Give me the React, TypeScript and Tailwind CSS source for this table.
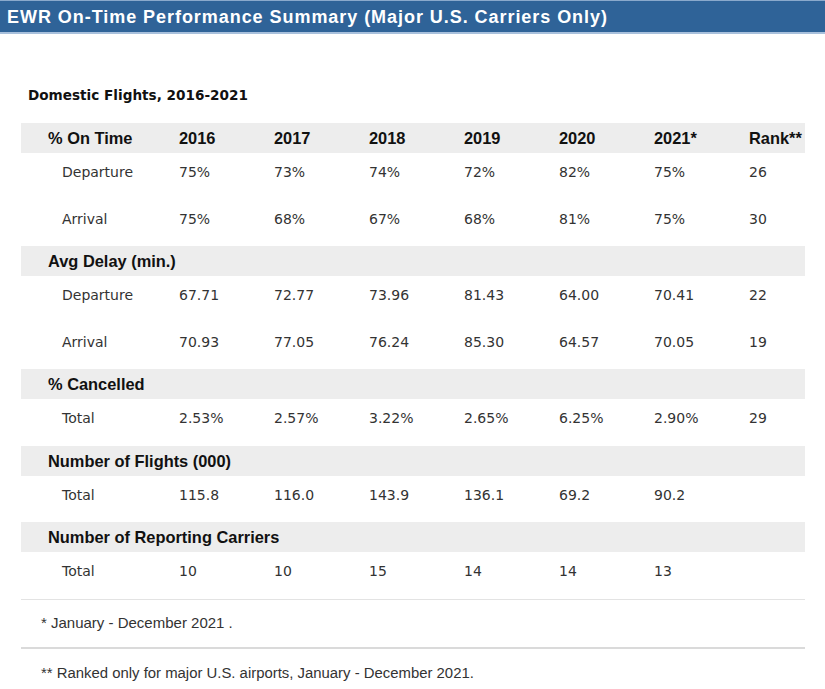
const years = ["2016", "2017", "2018", "2019", "2020", "2021*", "Rank**"];

const sections = [
  {
    title: "% On Time",
    showYears: true,
    rows: [
      { label: "Departure", values: ["75%", "73%", "74%", "72%", "82%", "75%", "26"] },
      { label: "Arrival", values: ["75%", "68%", "67%", "68%", "81%", "75%", "30"] },
    ],
  },
  {
    title: "Avg Delay (min.)",
    rows: [
      { label: "Departure", values: ["67.71", "72.77", "73.96", "81.43", "64.00", "70.41", "22"] },
      { label: "Arrival", values: ["70.93", "77.05", "76.24", "85.30", "64.57", "70.05", "19"] },
    ],
  },
  {
    title: "% Cancelled",
    rows: [{ label: "Total", values: ["2.53%", "2.57%", "3.22%", "2.65%", "6.25%", "2.90%", "29"] }],
  },
  {
    title: "Number of Flights (000)",
    rows: [{ label: "Total", values: ["115.8", "116.0", "143.9", "136.1", "69.2", "90.2", ""] }],
  },
  {
    title: "Number of Reporting Carriers",
    rows: [{ label: "Total", values: ["10", "10", "15", "14", "14", "13", ""] }],
  },
];

const cols = "grid grid-cols-[158px_95px_95px_95px_95px_95px_95px_56px]";

export default function App() {
  return (
    <div className="w-[825px] h-[689px] bg-white overflow-hidden">
      {/* Title bar */}
      <div className="h-[34px] bg-[#2f6398] border-t border-[#8aa9cc] border-b-2 border-b-[#a8c0dc] flex items-center pl-[7px]">
        <h1 className="font-['Liberation_Sans',Arial,sans-serif] font-bold text-[18px] tracking-[0.95px] text-white leading-none">
          EWR On-Time Performance Summary (Major U.S. Carriers Only)
        </h1>
      </div>

      <div className="pl-[21px] pr-[20px]">
        <h2 className="mt-[53px] ml-[7px] font-['DejaVu_Sans',Verdana,sans-serif] font-bold text-[13.6px] leading-[16px] text-[#111]">
          Domestic Flights, 2016-2021
        </h2>

        {/* Table */}
        <div className="mt-[20px]">
          {sections.map((section) => (
            <div key={section.title}>
              <div className={`${cols} h-[30px] pt-[1px] items-center bg-[#ededed] font-['Liberation_Sans',Arial,sans-serif] font-bold text-[16.4px] text-[#111]`}>
                <div className="pl-[27px] whitespace-nowrap">{section.title}</div>
                {section.showYears &&
                  years.map((y) => <div key={y}>{y}</div>)}
              </div>
              {section.rows.map((row) => (
                <div
                  key={row.label}
                  className={`${cols} h-[46.5px] pt-[11px] font-['DejaVu_Sans',Verdana,sans-serif] text-[14px] leading-[17px] text-[#333]`}
                >
                  <div className="pl-[41px]">{row.label}</div>
                  {row.values.map((v, i) => (
                    <div key={i}>{v}</div>
                  ))}
                </div>
              ))}
            </div>
          ))}
        </div>

        {/* Footnotes */}
        <div className="border-t border-[#e3e3e3] font-['Liberation_Sans',Arial,sans-serif] text-[15px] text-[#333]">
          <p className="pl-[20px] h-[47px] pt-[14px] leading-[18px]">* January - December 2021 .</p>
        </div>
        <div className="border-t-2 border-[#dadada] font-['Liberation_Sans',Arial,sans-serif] text-[14.9px] text-[#333]">
          <p className="pl-[20px] pt-[15px] leading-[18px]">
            ** Ranked only for major U.S. airports, January - December 2021.
          </p>
        </div>
      </div>
    </div>
  );
}
